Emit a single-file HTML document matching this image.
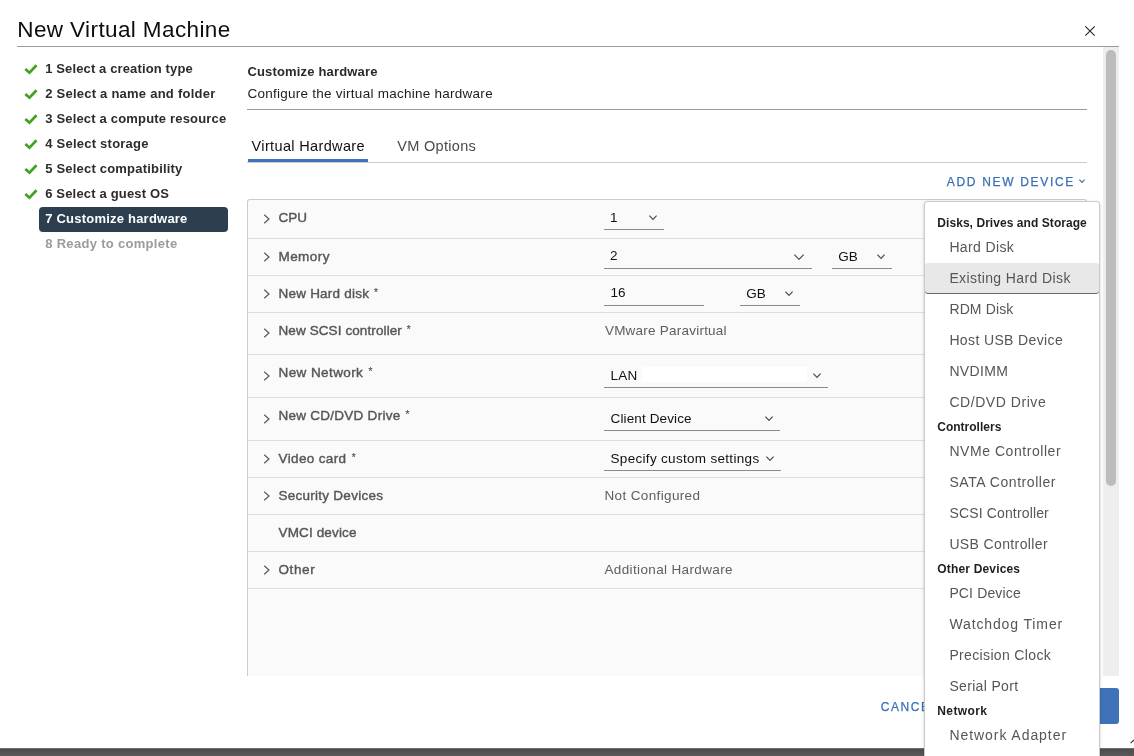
<!DOCTYPE html>
<html lang="en">
<head>
<meta charset="utf-8">
<title>New Virtual Machine</title>
<style>
*{box-sizing:border-box;margin:0;padding:0}
html,body{width:1134px;height:756px;overflow:hidden;background:#fff}
body{font-family:"Liberation Sans",sans-serif;color:#313131;font-size:13px;position:relative}
.abs{position:absolute;white-space:nowrap}
#hr1{left:17px;top:46px;width:1102px;height:1px;background:#9a9a9a}
#active{left:39px;top:207px;width:189px;height:25px;background:#2d3e4f;border-radius:4px}
#hr2{left:247px;top:109px;width:840px;height:1px;background:#9a9a9a}
#tabul{left:248px;top:159px;width:120px;height:3px;background:#3f72b8}
#hr3{left:247px;top:162px;width:840px;height:1px;background:#ccc}
#table{left:247px;top:199px;width:840px;height:477px;background:#fafafa;border:1px solid #ccc;border-bottom:none;border-radius:3px 3px 0 0}
.rb{left:248px;width:838px;height:1px;background:#dedede}
.ul{height:1px;background:#8a8a8a}
.lb{-webkit-text-stroke:0.4px #565656}
.as{font-size:10px;position:relative;top:-2.5px;margin-left:1px;-webkit-text-stroke:0.2px #565656}
#add,#cancel{-webkit-text-stroke:0.25px #3a6fb5}
#sbtrack{left:1103px;top:47px;width:16px;height:629px;background:#eee}
#sbthumb{left:1106px;top:50px;width:10px;height:436px;background:#bcbcbc;border-radius:5px}
#next{left:1040px;top:688px;width:79px;height:36px;background:#3f72b8;border-radius:3px}
#bar{left:0;top:748px;width:1134px;height:8px;background:linear-gradient(#808080 0,#4d4d4d 1.5px,#5a5a5a 8px)}
#dd{left:924px;top:201px;width:176px;height:571px;background:#fff;border:1px solid #ccc;border-radius:3px;box-shadow:0 1px 3px rgba(0,0,0,.22)}
#hl{left:925px;top:263px;width:174px;height:30px;background:#e8e8e8;border-radius:3px;box-shadow:0 1px 0 #6a6a6a}
</style>
</head>
<body>
<div id="w" style="position:absolute;left:0;top:0;width:1134px;height:756px;will-change:transform">
<div class="abs m " id="title" style="left:17.3px;top:15px;font-size:22.5px;line-height:30px;color:#0d0d0d;letter-spacing:0.39px">New Virtual Machine</div>
<svg class="abs" style="left:1084px;top:25px" width="12" height="12" viewBox="0 0 12 12"><path d="M1.3 1.3L10.7 10.7M10.7 1.3L1.3 10.7" stroke="#222" stroke-width="1.1" fill="none"/></svg>
<div class="abs" id="hr1"></div>

<div class="abs" id="active"></div>
<div class="abs m " style="left:45.2px;top:61px;font-size:13px;line-height:16px;font-weight:bold;color:#2c2c2c;letter-spacing:0.13px">1 Select a creation type</div>
<svg class="abs" style="left:24px;top:64px" width="14" height="11" viewBox="0 0 14 11"><path d="M1.3 4.9L5.5 8.7L12.5 1.3" stroke="#42a11f" stroke-width="2.7" fill="none"/></svg>
<div class="abs m " style="left:45.2px;top:86px;font-size:13px;line-height:16px;font-weight:bold;color:#2c2c2c;letter-spacing:0.24px">2 Select a name and folder</div>
<svg class="abs" style="left:24px;top:89px" width="14" height="11" viewBox="0 0 14 11"><path d="M1.3 4.9L5.5 8.7L12.5 1.3" stroke="#42a11f" stroke-width="2.7" fill="none"/></svg>
<div class="abs m " style="left:45.2px;top:111px;font-size:13px;line-height:16px;font-weight:bold;color:#2c2c2c;letter-spacing:0.18px">3 Select a compute resource</div>
<svg class="abs" style="left:24px;top:114px" width="14" height="11" viewBox="0 0 14 11"><path d="M1.3 4.9L5.5 8.7L12.5 1.3" stroke="#42a11f" stroke-width="2.7" fill="none"/></svg>
<div class="abs m " style="left:45.2px;top:136px;font-size:13px;line-height:16px;font-weight:bold;color:#2c2c2c;letter-spacing:0.24px">4 Select storage</div>
<svg class="abs" style="left:24px;top:139px" width="14" height="11" viewBox="0 0 14 11"><path d="M1.3 4.9L5.5 8.7L12.5 1.3" stroke="#42a11f" stroke-width="2.7" fill="none"/></svg>
<div class="abs m " style="left:45.2px;top:161px;font-size:13px;line-height:16px;font-weight:bold;color:#2c2c2c;letter-spacing:0.2px">5 Select compatibility</div>
<svg class="abs" style="left:24px;top:164px" width="14" height="11" viewBox="0 0 14 11"><path d="M1.3 4.9L5.5 8.7L12.5 1.3" stroke="#42a11f" stroke-width="2.7" fill="none"/></svg>
<div class="abs m " style="left:45.2px;top:186px;font-size:13px;line-height:16px;font-weight:bold;color:#2c2c2c;letter-spacing:0.17px">6 Select a guest OS</div>
<svg class="abs" style="left:24px;top:189px" width="14" height="11" viewBox="0 0 14 11"><path d="M1.3 4.9L5.5 8.7L12.5 1.3" stroke="#42a11f" stroke-width="2.7" fill="none"/></svg>
<div class="abs m " style="left:45.2px;top:211px;font-size:13px;line-height:16px;font-weight:bold;color:#fff;letter-spacing:0.22px">7 Customize hardware</div>
<div class="abs m " style="left:45.2px;top:236px;font-size:13px;line-height:16px;font-weight:bold;color:#9b9b9b;letter-spacing:0.31px">8 Ready to complete</div>

<div class="abs m " id="h1" style="left:247.4px;top:64px;font-size:13px;line-height:16px;font-weight:bold;color:#2a2a2a;letter-spacing:0.17px">Customize hardware</div>
<div class="abs m " id="h2" style="left:247.4px;top:86px;font-size:13.5px;line-height:16px;color:#1d1d1d;letter-spacing:0.26px">Configure the virtual machine hardware</div>
<div class="abs" id="hr2"></div>
<div class="abs m " id="tab1" style="left:251.6px;top:136px;font-size:14.5px;line-height:20px;color:#111;letter-spacing:0.35px">Virtual Hardware</div>
<div class="abs m " id="tab2" style="left:397.3px;top:136px;font-size:14.5px;line-height:20px;color:#4a4a4a;letter-spacing:0.3px">VM Options</div>
<div class="abs" id="hr3"></div>
<div class="abs" id="tabul"></div>
<div class="abs m" id="add" style="left:946.8px;top:174px;font-size:12px;line-height:16px;color:#3a6fb5;letter-spacing:1.68px">ADD NEW DEVICE</div>
<svg class="abs" style="left:1078px;top:178px" width="8" height="6" viewBox="0 0 8 6"><path d="M1.4 1.6L4.0 4.4L6.6 1.6" stroke="#3a6fb5" stroke-width="1.15" fill="none"/></svg>

<div class="abs" id="table"></div>
<div class="abs rb" style="top:238px"></div>
<div class="abs m lb" style="left:278.5px;top:210px;font-size:13.5px;line-height:16px;color:#565656;letter-spacing:0px">CPU</div>
<svg class="abs" style="left:263px;top:214px" width="8" height="10" viewBox="0 0 8 10"><path d="M1.2 0.8L6 5L1.2 9.2" stroke="#565656" stroke-width="1.15" fill="none"/></svg>
<div class="abs rb" style="top:275px"></div>
<div class="abs m lb" style="left:278.5px;top:249px;font-size:13.5px;line-height:16px;color:#565656;letter-spacing:0.43px">Memory</div>
<svg class="abs" style="left:263px;top:252px" width="8" height="10" viewBox="0 0 8 10"><path d="M1.2 0.8L6 5L1.2 9.2" stroke="#565656" stroke-width="1.15" fill="none"/></svg>
<div class="abs rb" style="top:312px"></div>
<div class="abs m lb" style="left:278.5px;top:286px;font-size:13.5px;line-height:16px;color:#565656;letter-spacing:0.22px">New Hard disk <span class="as">*</span></div>
<svg class="abs" style="left:263px;top:289px" width="8" height="10" viewBox="0 0 8 10"><path d="M1.2 0.8L6 5L1.2 9.2" stroke="#565656" stroke-width="1.15" fill="none"/></svg>
<div class="abs rb" style="top:354px"></div>
<div class="abs m lb" style="left:278.5px;top:323px;font-size:13.5px;line-height:16px;color:#565656;letter-spacing:0.1px">New SCSI controller <span class="as">*</span></div>
<svg class="abs" style="left:263px;top:328px" width="8" height="10" viewBox="0 0 8 10"><path d="M1.2 0.8L6 5L1.2 9.2" stroke="#565656" stroke-width="1.15" fill="none"/></svg>
<div class="abs rb" style="top:397px"></div>
<div class="abs m lb" style="left:278.5px;top:365px;font-size:13.5px;line-height:16px;color:#565656;letter-spacing:0.41px">New Network <span class="as">*</span></div>
<svg class="abs" style="left:263px;top:371px" width="8" height="10" viewBox="0 0 8 10"><path d="M1.2 0.8L6 5L1.2 9.2" stroke="#565656" stroke-width="1.15" fill="none"/></svg>
<div class="abs rb" style="top:440px"></div>
<div class="abs m lb" style="left:278.5px;top:408px;font-size:13.5px;line-height:16px;color:#565656;letter-spacing:0.26px">New CD/DVD Drive <span class="as">*</span></div>
<svg class="abs" style="left:263px;top:414px" width="8" height="10" viewBox="0 0 8 10"><path d="M1.2 0.8L6 5L1.2 9.2" stroke="#565656" stroke-width="1.15" fill="none"/></svg>
<div class="abs rb" style="top:477px"></div>
<div class="abs m lb" style="left:278.5px;top:451px;font-size:13.5px;line-height:16px;color:#565656;letter-spacing:0.37px">Video card <span class="as">*</span></div>
<svg class="abs" style="left:263px;top:454px" width="8" height="10" viewBox="0 0 8 10"><path d="M1.2 0.8L6 5L1.2 9.2" stroke="#565656" stroke-width="1.15" fill="none"/></svg>
<div class="abs rb" style="top:514px"></div>
<div class="abs m lb" style="left:278.5px;top:488px;font-size:13.5px;line-height:16px;color:#565656;letter-spacing:0.26px">Security Devices</div>
<svg class="abs" style="left:263px;top:491px" width="8" height="10" viewBox="0 0 8 10"><path d="M1.2 0.8L6 5L1.2 9.2" stroke="#565656" stroke-width="1.15" fill="none"/></svg>
<div class="abs rb" style="top:551px"></div>
<div class="abs m lb" style="left:278.5px;top:525px;font-size:13.5px;line-height:16px;color:#565656;letter-spacing:0.14px">VMCI device</div>
<div class="abs rb" style="top:588px"></div>
<div class="abs m lb" style="left:278.5px;top:562px;font-size:13.5px;line-height:16px;color:#565656;letter-spacing:0.59px">Other</div>
<svg class="abs" style="left:263px;top:565px" width="8" height="10" viewBox="0 0 8 10"><path d="M1.2 0.8L6 5L1.2 9.2" stroke="#565656" stroke-width="1.15" fill="none"/></svg>
<div class="abs m " style="left:610px;top:210px;font-size:13.5px;line-height:16px;color:#111;letter-spacing:0px">1</div>
<div class="abs ul" style="left:604px;top:229px;width:60px"></div>
<svg class="abs" style="left:648px;top:214px" width="10" height="7" viewBox="0 0 10 7"><path d="M1.4 1.6L5.0 5.4L8.6 1.6" stroke="#4a4a4a" stroke-width="1.15" fill="none"/></svg>
<div class="abs m " style="left:610px;top:248px;font-size:13.5px;line-height:16px;color:#111;letter-spacing:0px">2</div>
<div class="abs ul" style="left:604px;top:268px;width:208px"></div>
<svg class="abs" style="left:793px;top:253px" width="12" height="8" viewBox="0 0 12 8"><path d="M1.4 1.6L6.0 6.4L10.6 1.6" stroke="#4a4a4a" stroke-width="1.15" fill="none"/></svg>
<div class="abs m " style="left:838.2px;top:249px;font-size:13.5px;line-height:16px;color:#111;letter-spacing:0px">GB</div>
<div class="abs ul" style="left:832px;top:268px;width:60px"></div>
<svg class="abs" style="left:876px;top:253px" width="10" height="7" viewBox="0 0 10 7"><path d="M1.4 1.6L5.0 5.4L8.6 1.6" stroke="#4a4a4a" stroke-width="1.15" fill="none"/></svg>
<div class="abs m " style="left:610.4px;top:285px;font-size:13.5px;line-height:16px;color:#111;letter-spacing:0px">16</div>
<div class="abs ul" style="left:604px;top:305px;width:100px"></div>
<div class="abs m " style="left:746.2px;top:286px;font-size:13.5px;line-height:16px;color:#111;letter-spacing:0px">GB</div>
<div class="abs ul" style="left:740px;top:305px;width:60px"></div>
<svg class="abs" style="left:784px;top:290px" width="10" height="7" viewBox="0 0 10 7"><path d="M1.4 1.6L5.0 5.4L8.6 1.6" stroke="#4a4a4a" stroke-width="1.15" fill="none"/></svg>
<div class="abs m " style="left:604.9px;top:323px;font-size:13.5px;line-height:16px;color:#5e5e5e;letter-spacing:0.23px">VMware Paravirtual</div>
<div class="abs" style="left:642px;top:367px;width:165px;height:15px;background:#fff"></div>
<div class="abs m " style="left:610.5px;top:368px;font-size:13.5px;line-height:16px;color:#111;letter-spacing:0.22px">LAN</div>
<div class="abs ul" style="left:604px;top:387px;width:224px"></div>
<svg class="abs" style="left:812px;top:372px" width="10" height="7" viewBox="0 0 10 7"><path d="M1.4 1.6L5.0 5.4L8.6 1.6" stroke="#4a4a4a" stroke-width="1.15" fill="none"/></svg>
<div class="abs m " style="left:610.5px;top:411px;font-size:13.5px;line-height:16px;color:#111;letter-spacing:0.13px">Client Device</div>
<div class="abs ul" style="left:604px;top:430px;width:176px"></div>
<svg class="abs" style="left:764px;top:415px" width="10" height="7" viewBox="0 0 10 7"><path d="M1.4 1.6L5.0 5.4L8.6 1.6" stroke="#4a4a4a" stroke-width="1.15" fill="none"/></svg>
<div class="abs m " style="left:610.5px;top:451px;font-size:13.5px;line-height:16px;color:#111;letter-spacing:0.31px">Specify custom settings</div>
<div class="abs ul" style="left:604px;top:470px;width:177px"></div>
<svg class="abs" style="left:765px;top:455px" width="10" height="7" viewBox="0 0 10 7"><path d="M1.4 1.6L5.0 5.4L8.6 1.6" stroke="#4a4a4a" stroke-width="1.15" fill="none"/></svg>
<div class="abs m " style="left:604.5px;top:488px;font-size:13.5px;line-height:16px;color:#5e5e5e;letter-spacing:0.36px">Not Configured</div>
<div class="abs m " style="left:604.5px;top:562px;font-size:13.5px;line-height:16px;color:#5e5e5e;letter-spacing:0.36px">Additional Hardware</div>
<div class="abs" id="sbtrack"></div>
<div class="abs" id="sbthumb"></div>
<div class="abs m" id="cancel" style="left:880.8px;top:699px;font-size:12px;line-height:16px;color:#3a6fb5;letter-spacing:1.55px">CANCEL</div>
<div class="abs" id="next"></div>
<div class="abs" id="bar"></div>
<svg class="abs" style="left:1129px;top:738px" width="5" height="7" viewBox="0 0 5 7"><path d="M1.6 5.2L5 2" stroke="#333" stroke-width="1.1" fill="none"/></svg>
<div class="abs" id="dd"></div>
<div class="abs" id="hl"></div>
<div class="abs m " style="left:937.3px;top:215px;font-size:12px;line-height:16px;font-weight:bold;color:#1f1f1f;letter-spacing:0.06px">Disks, Drives and Storage</div>
<div class="abs m " style="left:949.4px;top:238px;font-size:14px;line-height:18px;color:#565656;letter-spacing:0.37px">Hard Disk</div>
<div class="abs m " style="left:949.4px;top:269px;font-size:14px;line-height:18px;color:#565656;letter-spacing:0.39px">Existing Hard Disk</div>
<div class="abs m " style="left:949.4px;top:300px;font-size:14px;line-height:18px;color:#565656;letter-spacing:0.13px">RDM Disk</div>
<div class="abs m " style="left:949.4px;top:331px;font-size:14px;line-height:18px;color:#565656;letter-spacing:0.37px">Host USB Device</div>
<div class="abs m " style="left:949.4px;top:362px;font-size:14px;line-height:18px;color:#565656;letter-spacing:0.35px">NVDIMM</div>
<div class="abs m " style="left:949.4px;top:393px;font-size:14px;line-height:18px;color:#565656;letter-spacing:0.55px">CD/DVD Drive</div>
<div class="abs m " style="left:937.3px;top:419px;font-size:12px;line-height:16px;font-weight:bold;color:#1f1f1f;letter-spacing:0.0px">Controllers</div>
<div class="abs m " style="left:949.4px;top:442px;font-size:14px;line-height:18px;color:#565656;letter-spacing:0.55px">NVMe Controller</div>
<div class="abs m " style="left:949.4px;top:473px;font-size:14px;line-height:18px;color:#565656;letter-spacing:0.56px">SATA Controller</div>
<div class="abs m " style="left:949.4px;top:504px;font-size:14px;line-height:18px;color:#565656;letter-spacing:0.15px">SCSI Controller</div>
<div class="abs m " style="left:949.4px;top:535px;font-size:14px;line-height:18px;color:#565656;letter-spacing:0.37px">USB Controller</div>
<div class="abs m " style="left:937.3px;top:561px;font-size:12px;line-height:16px;font-weight:bold;color:#1f1f1f;letter-spacing:0.17px">Other Devices</div>
<div class="abs m " style="left:949.4px;top:584px;font-size:14px;line-height:18px;color:#565656;letter-spacing:0.14px">PCI Device</div>
<div class="abs m " style="left:949.4px;top:615px;font-size:14px;line-height:18px;color:#565656;letter-spacing:0.88px">Watchdog Timer</div>
<div class="abs m " style="left:949.4px;top:646px;font-size:14px;line-height:18px;color:#565656;letter-spacing:0.35px">Precision Clock</div>
<div class="abs m " style="left:949.4px;top:677px;font-size:14px;line-height:18px;color:#565656;letter-spacing:0.33px">Serial Port</div>
<div class="abs m " style="left:937.3px;top:703px;font-size:12px;line-height:16px;font-weight:bold;color:#1f1f1f;letter-spacing:0.39px">Network</div>
<div class="abs m " style="left:949.4px;top:726px;font-size:14px;line-height:18px;color:#565656;letter-spacing:0.94px">Network Adapter</div>
</div>
</body>
</html>
